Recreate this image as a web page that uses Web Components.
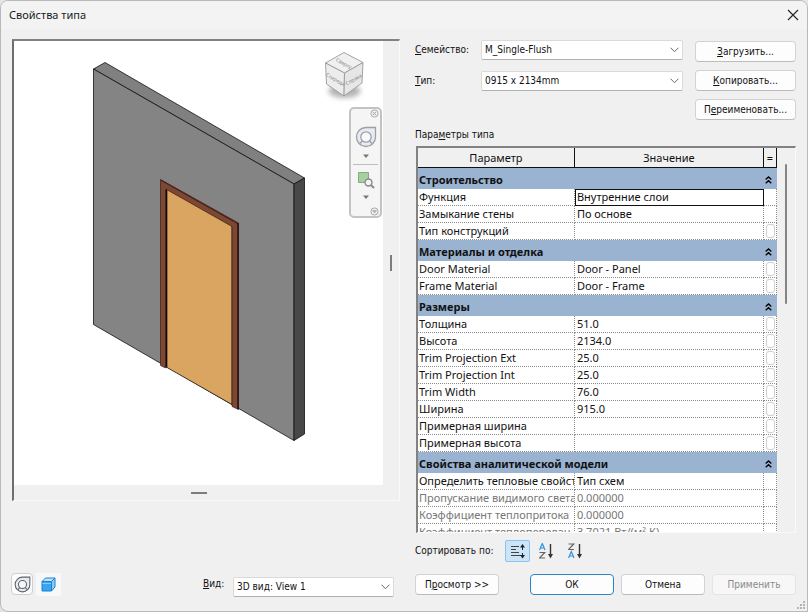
<!DOCTYPE html>
<html lang="ru">
<head>
<meta charset="utf-8">
<title>Свойства типа</title>
<style>
html,body{margin:0;height:100%;background:#e4e4e4}
body{
  --ui:"DejaVu Sans Condensed","DejaVu Sans",Tahoma,sans-serif;
  --doc:"Noto Sans","Segoe UI",sans-serif;
  font:10px/14px var(--ui);color:#111}
u{text-underline-offset:1px}
</style>
</head>
<body>
<type-dialog>
  <title-bar slot="title">Свойства типа</title-bar>
  <preview-pane slot="left"></preview-pane>
  <preview-footer slot="left"></preview-footer>
  <type-picker slot="right"></type-picker>
  <param-grid slot="right"><u>м</u></param-grid>
  <sort-bar slot="right">Сортировать по:</sort-bar>
  <action-bar slot="right">
    <dialog-button><span>П<u>р</u>осмотр &gt;&gt;</span></dialog-button>
    <dialog-button kind="primary">ОК</dialog-button>
    <dialog-button>Отмена</dialog-button>
    <dialog-button kind="disabled">Применить</dialog-button>
  </action-bar>
</type-dialog>

<script>
const define = (name, html, init) => customElements.define(name, class extends HTMLElement {
  constructor() {
    super();
    const t = document.createElement('template');
    t.innerHTML = typeof html === 'function' ? html(this) : html;
    this.attachShadow({mode: 'open'}).append(t.content.cloneNode(true));
    if (init) init(this, this.shadowRoot);
  }
});

/* Dialog frame with two columns */
define('type-dialog', `
<style>
:host{display:flex;flex-direction:column;height:100vh;box-sizing:border-box;background:#f0f0f0;border:1px solid #b9b9b9;border-radius:8px 8px 0 8px;overflow:hidden;position:relative}
main{flex:1;min-height:0;display:grid;grid-template-columns:388fr 381fr;gap:15px;padding:10px 11px 14px}
section{display:flex;flex-direction:column;min-width:0;min-height:0}
.grip{position:absolute;right:1px;bottom:1px;width:9px;height:9px}
</style>
<slot name="title"></slot>
<main><section><slot name="left"></slot></section><section><slot name="right"></slot></section></main>
<svg class="grip" viewBox="0 0 9 9" fill="#b4b4b4"><path d="M6 0h2v2h-2zM3 3h2v2h-2zM6 3h2v2h-2zM0 6h2v2h-2zM3 6h2v2h-2zM6 6h2v2h-2z"/></svg>`);

define('title-bar', `
<style>
:host{display:flex;align-items:center;justify-content:space-between;height:28px;padding:0 4px 0 8px;background:#f3f3f3;font:11px/16px var(--doc);color:#1a1a1a}
button{border:0;background:none;padding:0;width:20px;height:20px;display:grid;place-items:center}
</style>
<slot></slot>
<button aria-label="Закрыть"><svg width="12" height="12" viewBox="0 0 12 12" stroke="#222" stroke-width="1.1"><path d="M1 1l10 10M11 1L1 11"/></svg></button>`);

/* Push button */
define('dialog-button', `
<style>
:host{display:grid}
button{font:inherit;color:#111;background:#fdfdfd;border:1px solid #d2d2d2;border-bottom-color:#bcbcbc;border-radius:4px;height:21px;padding:0;min-width:0;white-space:nowrap}
:host([kind=primary]) button{border-color:#2a86cc}
:host([kind=disabled]) button{color:#8a8a8a;background:#f7f7f7;border-color:#e4e4e4}
</style>
<button><slot></slot></button>`,
(el, root) => { if (el.getAttribute('kind') === 'disabled') root.querySelector('button').disabled = true; });

/* Labelled drop-down */
define('field-select', el => `
<style>
:host{display:grid;grid-template-columns:var(--label,66px) 1fr;align-items:center}
label{align-self:var(--label-align,center)}
u{text-underline-offset:1px}
div{display:grid;align-items:center;min-width:0}
select,svg{grid-area:1/1}
select{appearance:none;font:inherit;color:#111;height:20px;width:100%;background:#fff;border:1px solid #dadada;border-bottom-color:#b0b0b0;border-radius:2px;padding:0 20px 0 3px;margin:0}
svg{justify-self:end;margin-right:4px;pointer-events:none}
</style>
<label for="s"><u>${el.getAttribute('label')[0]}</u>${el.getAttribute('label').slice(1)}</label>
<div><select id="s"><option>${el.getAttribute('value')}</option></select>
<svg width="9" height="6" viewBox="0 0 9 6" fill="none" stroke="#666"><path d="M.5 .7l4 4 4-4"/></svg></div>`);

define('type-picker', `
<style>
:host{display:grid;grid-template-columns:1fr 101px;gap:12px;padding-top:1px}
.fields,.buttons{display:flex;flex-direction:column}
.fields{gap:11px}
.buttons{gap:8px;padding-top:1px}
u{text-underline-offset:1px}
</style>
<div class="fields">
<field-select label="Семейство:" value="M_Single-Flush"></field-select>
<field-select label="Тип:" value="0915 x 2134mm"></field-select>
</div>
<div class="buttons">
<dialog-button><span><u>З</u>агрузить...</span></dialog-button>
<dialog-button><span><u>К</u>опировать...</span></dialog-button>
<dialog-button><span>П<u>е</u>реименовать...</span></dialog-button>
</div>`);

/* Parameter table */
const groups = [
  ['Строительство', [['Функция','Внутренние слои','sel'],['Замыкание стены','По основе',''],['Тип конструкций','','b']]],
  ['Материалы и отделка', [['Door Material','Door - Panel','b'],['Frame Material','Door - Frame','b']]],
  ['Размеры', [['Толщина','51.0','b'],['Высота','2134.0','b'],['Trim Projection Ext','25.0','b'],['Trim Projection Int','25.0','b'],['Trim Width','76.0','b'],['Ширина','915.0','b'],['Примерная ширина','','b'],['Примерная высота','','b']]],
  ['Свойства аналитической модели', [['Определить тепловые свойст','Тип схем',''],['Пропускание видимого света','0.000000','off'],['Коэффициент теплопритока','0.000000','off'],['Коэффициент теплопередач','3.7021 Вт/(м²·К)','off']]]
];
const rows = groups.map(([g, list]) => `
<tr class="group"><th colspan="3" scope="rowgroup"><div><span>${g}</span><button aria-label="Свернуть"><svg width="7" height="8" viewBox="0 0 7 8" fill="none" stroke="#000" stroke-width="1.3"><path d="M.7 3.6L3.5 1l2.8 2.6M.7 7.3l2.8-2.6 2.8 2.6"/></svg></button></div></th></tr>` +
  list.map(([p, v, k]) => `<tr class="${k}"><td>${p}</td><td>${v}</td><td>${k === 'b' ? '<button aria-label="Связать"></button>' : ''}</td></tr>`).join('')).join('');
define('param-grid', `
<style>
:host{display:flex;flex-direction:column;flex:1;min-height:0;margin-top:8px}
.caption{height:14px;margin-bottom:4px}
u{text-underline-offset:1px}
.frame{flex:1;min-height:0;display:flex;margin-left:1px;border:solid;border-width:2px 1px 1px 2px;border-color:#828282 #fafafa #fafafa #828282}
.view{flex:1;min-width:0;overflow:hidden;background:#fff}
table{width:100%;table-layout:fixed;border-spacing:0;font:11px/16px var(--doc);color:#111}
thead th{box-sizing:border-box;height:20px;padding:0;background:#f0f0f0;border-right:1px solid #111;border-bottom:1px solid #111;font-weight:400}
col.p{width:43.7%}col.e{width:13px}
td{box-sizing:border-box;height:17px;padding:0 0 0 1px;border-bottom:1px dotted #8c8c8c;border-right:1px dotted #8c8c8c;white-space:nowrap;overflow:hidden;vertical-align:top}
td:nth-child(2){padding-left:2px}
td:last-child{padding:1px 0 0}
.sel td:nth-child(2){outline:1px solid #111;outline-offset:-1px}
.off td{color:#777}
.group th{box-sizing:border-box;height:21px;padding:2px 5px 0 1px;background:#9ab3d1;text-align:left;font-weight:700}
.group div{display:flex;align-items:center;justify-content:space-between}
.group button{border:0;background:none;padding:0;display:grid}
td button{display:block;width:9px;height:14px;margin:0 auto;padding:0;background:#fff;border:1px solid #cfcfcf;border-radius:3px}
.scroll{width:18px;background:#f0f0f0;display:flex;flex-direction:column;align-items:center;padding-top:16px}
.scroll i{width:2px;height:38%;background:#858585;border-radius:1px}
</style>
<div class="caption">Пара<slot></slot>етры типа</div>
<div class="frame">
<div class="view"><table><colgroup><col class="p"><col><col class="e"></colgroup>
<thead><tr><th scope="col">Параметр</th><th scope="col">Значение</th><th scope="col">=</th></tr></thead>
<tbody>${rows}</tbody></table></div>
<div class="scroll"><i></i></div>
</div>`);

define('sort-bar', `
<style>
:host{display:flex;align-items:center;height:22px;margin-top:7px}
.tools{display:flex;gap:4px;margin-left:12px}
button{box-sizing:border-box;width:25px;height:22px;padding:0;border:1px solid transparent;border-radius:2px;background:none;display:grid;place-items:center}
button.on{background:#cce4f7;border-color:#8fc3ee}
</style>
<slot></slot>
<div class="tools">
<button class="on" aria-label="По группам"><svg width="16" height="16" viewBox="0 0 16 16" fill="none" stroke="#444"><path d="M1 3.5h8M1 6.5h5M1 9.5h8M1 12.5h11" /><path d="M12.500 2v5M12.500 10v4" stroke="#222"/><path d="M10 4.500l2.500-3.500 2.500 3.500zM10 12l2.500 3.500 2.500-3.500z" fill="#222" stroke="none"/></svg></button>
<button aria-label="По возрастанию"><svg width="16" height="16" viewBox="0 0 16 16" fill="none" stroke-width="1.200"><path d="M.500 7l2.800-6.500L6 7M1.400 5h3.800" stroke="#2d93df"/><path d="M.500 9.500h5.200l-5.200 5.500h5.500" stroke="#666"/><path d="M11.500 1v11" stroke="#333" stroke-width="1.400"/><path d="M9 11l2.500 4.500L14 11z" fill="#333"/></svg></button>
<button aria-label="По убыванию"><svg width="16" height="16" viewBox="0 0 16 16" fill="none" stroke-width="1.200"><path d="M.500 1h5.200l-5.200 5.500h5.500" stroke="#666"/><path d="M.500 15l2.800-6.500L6 15M1.400 13h3.800" stroke="#2d93df"/><path d="M11.500 1v11" stroke="#333" stroke-width="1.400"/><path d="M9 11l2.500 4.500L14 11z" fill="#333"/></svg></button>
</div>`);

define('action-bar', `
<style>
:host{display:grid;grid-template-columns:84px 1fr 84px 84px 84px;column-gap:7px;margin:12px 0 2px}
::slotted(:nth-child(1)){grid-column:1}
::slotted(:nth-child(2)){grid-column:3}
</style>
<slot></slot>`);

const wheel = (size, ring, width) => `<svg width="${size}" height="${size}" viewBox="0 0 22 22" fill="#e9ebf1" stroke="${ring}" stroke-width="${width}"><path d="M11 1.500h9.500V11A9.500 9.500 0 1 1 11 1.500z"/><circle cx="11" cy="11" r="5.200" fill="#f8f8f8"/><path d="M5 17.500l2.300-2.500M17 17.500l-2.300-2.500"/></svg>`;

/* 3D preview: drawing, view cube and navigation bar */
define('preview-pane', `
<style>
:host{flex:1;min-height:0;display:grid;grid-template-columns:1fr 16px;grid-template-rows:1fr 15px;border:solid;border-width:2px 1px 1px 2px;border-color:#828282 #fafafa #fafafa #6e6e6e;background:#f0f0f0}
.canvas{position:relative;background:#fff;min-width:0;min-height:0}
.scene{display:block;width:100%;height:100%;position:absolute;inset:0}
.bar{display:grid;place-items:center}
.bar i{background:#7c7c7c}
.v i{width:2px;height:16px}.h i{width:16px;height:2px}
.cube{position:absolute;right:15px;top:8px}
.nav{position:absolute;right:1px;top:66px;box-sizing:border-box;width:33px;height:111px;border:2px solid #c3c3c3;border-radius:5px;background:#f5f5f5;display:flex;flex-direction:column;align-items:center}
button{border:0;background:none;padding:0;display:grid;place-items:center}
.mini{align-self:flex-end;margin:0 1px}
.nav hr{width:25px;height:1px;border:0;background:#bcbcbc;margin:0}
</style>
<div class="canvas">
<svg class="scene" viewBox="14 41 369 444" stroke="#111" stroke-width=".8" stroke-linejoin="round">
<path d="M93.500 69L105 62.500 304.500 178 294 184z" fill="#808080"/>
<path d="M93.500 69L294 184V440.500L93.500 324.500z" fill="#848484"/>
<path d="M294 184l10.500-6V434L294 440.500z" fill="#484848"/>
<path d="M167 188L232 225.500V404.500L167 367.500z" fill="#daa561" stroke-width=".7"/>
<path d="M160.500 179.500L238.500 223V409.500l-6.500-3V226.500L166.500 189.500V367l-1 1-5-2.500z" fill="#7c4733" stroke="#2c130d" stroke-width=".6"/>
<path d="M161 180.200L237.500 223.400" stroke="#4a2418" stroke-width="1.200"/>
<path d="M238 223V409.300" stroke="#200a08" stroke-width="1.300"/>
<path d="M166.200 189.500V367.500" stroke="#160608" stroke-width="1.500"/>
</svg>
<svg class="cube" width="48" height="56" viewBox="321 49 48 56">
<defs><filter id="f" x="-30%" y="-60%" width="160%" height="220%"><feGaussianBlur stdDeviation="2.500"/></filter></defs>
<ellipse cx="345.500" cy="91" rx="16" ry="7" fill="#b4b4b4" filter="url(#f)"/>
<g stroke="#9a9a9a" stroke-width=".9" stroke-linejoin="round">
<path d="M345 52.500L364 62.500 345.500 73 326.500 63z" fill="#f0f0f0"/><path d="M326.500 63L345.500 73 345 96 327.500 84z" fill="#ededed"/><path d="M364 62.500L345.500 73 345 96 363 83z" fill="#e6e6e6"/></g>
<g font-family="Noto Sans" font-size="5" fill="#868686" text-anchor="middle"><text transform="translate(344 65) rotate(28)">Сверху</text><text transform="translate(335.500 81) rotate(30)">Спереди</text><text transform="translate(355.500 81) rotate(-30)">Справа</text></g>
</svg>
<div class="nav">
<button class="mini" aria-label="Закрыть панель"><svg width="9" height="9" viewBox="0 0 9 9" fill="#eee" stroke="#aaa"><circle cx="4.500" cy="4.500" r="3.600"/><path d="M3 3l3 3M6 3L3 6"/></svg></button>
<button style="margin-top:8px" aria-label="Штурвал">${wheel(22, '#9a9fa9', 1.3)}</button>
<button style="height:16px" aria-label="Меню штурвала"><svg width="6" height="4" viewBox="0 0 6 4"><path d="M0 .5h6L3 4z" fill="#777"/></svg></button>
<hr>
<button style="margin-top:6px" aria-label="Масштаб"><svg width="18" height="18" viewBox="0 0 18 18"><path d="M1.500 1.500h10v10h-10z" fill="#a7cf9f" stroke="#82ae7b"/><circle cx="11.500" cy="11.500" r="3.500" fill="#f3f3f3" stroke="#8a8a8a" stroke-width="1.400"/><path d="M14 14l3 3" stroke="#8a8a8a" stroke-width="2"/></svg></button>
<button style="height:16px" aria-label="Меню масштаба"><svg width="6" height="4" viewBox="0 0 6 4"><path d="M0 .5h6L3 4z" fill="#777"/></svg></button>
<button class="mini" style="margin-top:auto" aria-label="Параметры панели"><svg width="9" height="9" viewBox="0 0 9 9" fill="#eee" stroke="#aaa"><circle cx="4.500" cy="4.500" r="3.600"/><path d="M2.500 3.500h4L4.500 6z" fill="#aaa" stroke-width=".5"/></svg></button>
</div>
</div>
<div class="bar v"><i></i></div>
<div class="bar h"><i></i></div>`);

define('preview-footer', `
<style>
:host{display:flex;align-items:flex-start;height:24px;margin-top:72px}
button{box-sizing:border-box;padding:0;display:grid;place-items:center}
.w{width:22px;height:22px;border:1px solid #cfcfcf;border-radius:4px;background:#fdfdfd;margin-left:-1px}
.c{width:25px;height:23px;border:0;background:#f8f8f8;margin-left:3px}
field-select{--label:30px;--label-align:start;flex:0 0 191px;margin-left:auto;margin-right:6px;align-self:flex-end}
</style>
<button class="w" aria-label="Штурвал">${wheel(17, '#5f6570', 1.4)}</button>
<button class="c" aria-label="Видовой куб"><svg width="15" height="15" viewBox="0 0 15 15" stroke="#1682d4" stroke-width="1" stroke-linejoin="round"><path d="M1 4.500L4.500 1H14L10.500 4.500z" fill="#bfe2fa"/><path d="M10.500 4.500L14 1v9l-3.500 4z" fill="#8ccaf5"/><path d="M1 4.500h9.500V14H1z" fill="#3ba4ee"/><path d="M1.500 6.500h8.500" stroke="#8bcbf7"/></svg></button>
<field-select label="Вид:" value="3D вид: View 1"></field-select>`);
</script>
</body>
</html>
